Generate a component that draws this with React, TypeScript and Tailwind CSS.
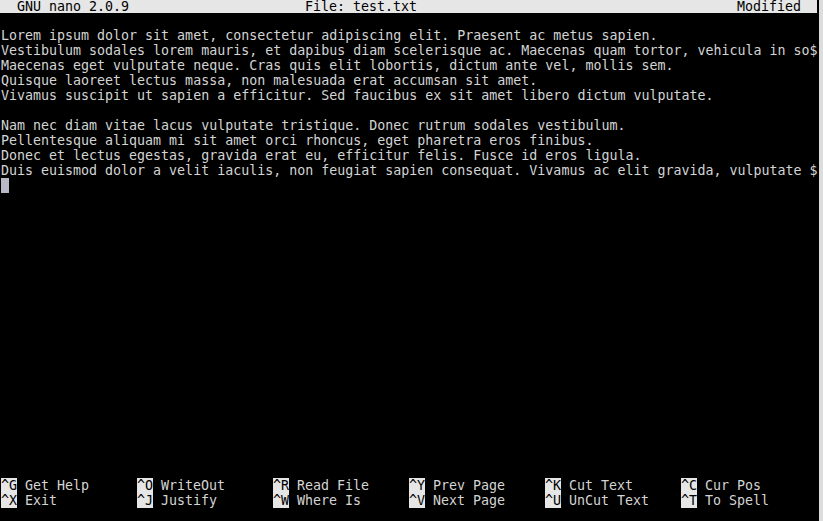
import React from "react";

const lines: string[] = [
  "",
  "Lorem ipsum dolor sit amet, consectetur adipiscing elit. Praesent ac metus sapien.",
  "Vestibulum sodales lorem mauris, et dapibus diam scelerisque ac. Maecenas quam tortor, vehicula in so$",
  "Maecenas eget vulputate neque. Cras quis elit lobortis, dictum ante vel, mollis sem.",
  "Quisque laoreet lectus massa, non malesuada erat accumsan sit amet.",
  "Vivamus suscipit ut sapien a efficitur. Sed faucibus ex sit amet libero dictum vulputate.",
  "",
  "Nam nec diam vitae lacus vulputate tristique. Donec rutrum sodales vestibulum.",
  "Pellentesque aliquam mi sit amet orci rhoncus, eget pharetra eros finibus.",
  "Donec et lectus egestas, gravida erat eu, efficitur felis. Fusce id eros ligula.",
  "Duis euismod dolor a velit iaculis, non feugiat sapien consequat. Vivamus ac elit gravida, vulputate $",
];

const shortcuts: [string, string][][] = [
  [
    ["^G", "Get Help"],
    ["^O", "WriteOut"],
    ["^R", "Read File"],
    ["^Y", "Prev Page"],
    ["^K", "Cut Text"],
    ["^C", "Cur Pos"],
  ],
  [
    ["^X", "Exit"],
    ["^J", "Justify"],
    ["^W", "Where Is"],
    ["^V", "Next Page"],
    ["^U", "UnCut Text"],
    ["^T", "To Spell"],
  ],
];

const mono = { fontFamily: '"DejaVu Sans Mono", "Liberation Mono", monospace' };

export default function App() {
  return (
    <div className="w-[823px] h-[521px] bg-black flex overflow-hidden">
      <div
        className="w-[819px] h-[521px] overflow-hidden text-[13.3px] text-[#d4d4d4]"
        style={mono}
      >
        <div className="flex flex-col">
          <div className="h-[13px] leading-[13px] w-[817px] bg-[#e6e6e6] text-black flex whitespace-pre pl-[1px]">
            <span className="w-[304px]">{"  GNU nano 2.0.9"}</span>
            <span className="w-[432px]">File: test.txt</span>
            <span>Modified</span>
          </div>
          {lines.map((l, i) => (
            <div key={i} className="h-[15px] leading-[15px] whitespace-pre pl-[1px]">
              {l}
            </div>
          ))}
          <div className="h-[15px] pl-[1px]">
            <div className="w-[8px] h-[15px] bg-[#b8b8c6]" />
          </div>
          <div className="h-[285px]" />
          {shortcuts.map((row, r) => (
            <div key={r} className="h-[15px] leading-[15px] whitespace-pre pl-[1px] grid grid-cols-[repeat(6,136px)]">
              {row.map(([k, label]) => (
                <div key={k} className="flex">
                  <span className="bg-[#e6e6e6] text-black">{k}</span>
                  <span>{" " + label}</span>
                </div>
              ))}
            </div>
          ))}
        </div>
      </div>
      <div className="w-[4px] h-[521px] bg-[#dcdcdc]" />
    </div>
  );
}
